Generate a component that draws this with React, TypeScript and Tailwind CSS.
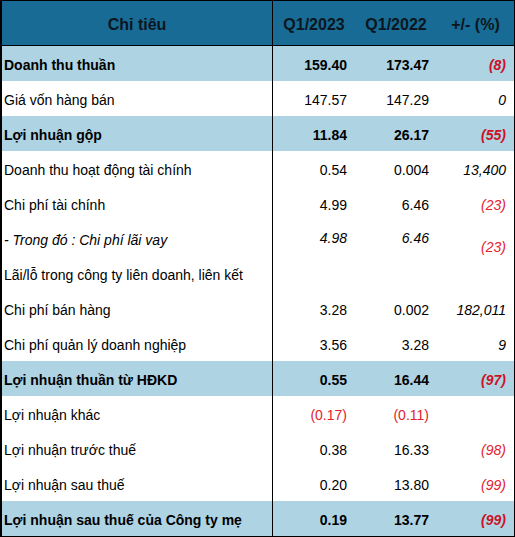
import React from "react";

type Row = {
  label: string;
  a?: string;
  b?: string;
  c?: string;
  bold?: boolean;
  italicLabel?: boolean;
  italicAB?: boolean;
  redAB?: boolean;
  redC?: boolean;
  shiftC?: boolean;
};

const rows: Row[] = [
  { label: "Doanh thu thuần", a: "159.40", b: "173.47", c: "(8)", bold: true, redC: true },
  { label: "Giá vốn hàng bán", a: "147.57", b: "147.29", c: "0" },
  { label: "Lợi nhuận gộp", a: "11.84", b: "26.17", c: "(55)", bold: true, redC: true },
  { label: "Doanh thu hoạt động tài chính", a: "0.54", b: "0.004", c: "13,400" },
  { label: "Chi phí tài chính", a: "4.99", b: "6.46", c: "(23)", redC: true },
  { label: "- Trong đó : Chi phí lãi vay", a: "4.98", b: "6.46", c: "(23)", redC: true, italicLabel: true, italicAB: true, shiftC: true },
  { label: "Lãi/lỗ trong công ty liên doanh, liên kết" },
  { label: "Chi phí bán hàng", a: "3.28", b: "0.002", c: "182,011" },
  { label: "Chi phí quản lý doanh nghiệp", a: "3.56", b: "3.28", c: "9" },
  { label: "Lợi nhuận thuần từ HĐKD", a: "0.55", b: "16.44", c: "(97)", bold: true, redC: true },
  { label: "Lợi nhuận khác", a: "(0.17)", b: "(0.11)", redAB: true },
  { label: "Lợi nhuận trước thuế", a: "0.38", b: "16.33", c: "(98)", redC: true },
  { label: "Lợi nhuận sau thuế", a: "0.20", b: "13.80", c: "(99)", redC: true },
  { label: "Lợi nhuận sau thuế của Công ty mẹ", a: "0.19", b: "13.77", c: "(99)", bold: true, redC: true },
];

export default function App() {
  return (
    <div
      className="w-[515px] h-[537px] bg-white border-t border-r border-b border-l-2 border-black text-black text-[14px]"
      style={{ fontFamily: '"Liberation Sans", Arial, sans-serif' }}
    >
      <div className="flex h-[45px] bg-[#176b94] border-b border-black font-bold text-[16px] text-[#0b1620] pt-[3px]">
        <div className="w-[271px] border-r border-black -mt-[3px] pt-[3px] flex items-center justify-center">Chỉ tiêu</div>
        <div className="w-[82px] flex items-center justify-center">Q1/2023</div>
        <div className="w-[82px] flex items-center justify-center">Q1/2022</div>
        <div className="flex-1 flex items-center justify-center">+/- (%)</div>
      </div>
      {rows.map((r, i) => (
        <div
          key={i}
          className={`flex h-[35px] ${r.bold ? "bg-[#aed3e3] font-bold" : "bg-white"}`}
        >
          <div className={`w-[271px] border-r border-black flex items-center pl-[2px] pt-[3px] ${r.italicLabel ? "italic" : ""}`}>
            {r.label}
          </div>
          <div
            className={`w-[82px] flex items-center justify-end pr-[8px] ${r.italicAB ? "italic pb-[1px]" : "pt-[3px]"} ${r.redAB ? "text-[#e3222b]" : ""}`}
          >
            {r.a}
          </div>
          <div
            className={`w-[82px] flex items-center justify-end pr-[8px] ${r.italicAB ? "italic pb-[1px]" : "pt-[3px]"} ${r.redAB ? "text-[#e3222b]" : ""}`}
          >
            {r.b}
          </div>
          <div
            className={`flex-1 flex items-center justify-end pr-[8px] italic ${r.redC ? (r.bold ? "text-[#cc1126]" : "text-[#e3222b]") : ""} ${r.shiftC ? "pt-[18px]" : "pt-[3px]"}`}
          >
            {r.c}
          </div>
        </div>
      ))}
    </div>
  );
}
